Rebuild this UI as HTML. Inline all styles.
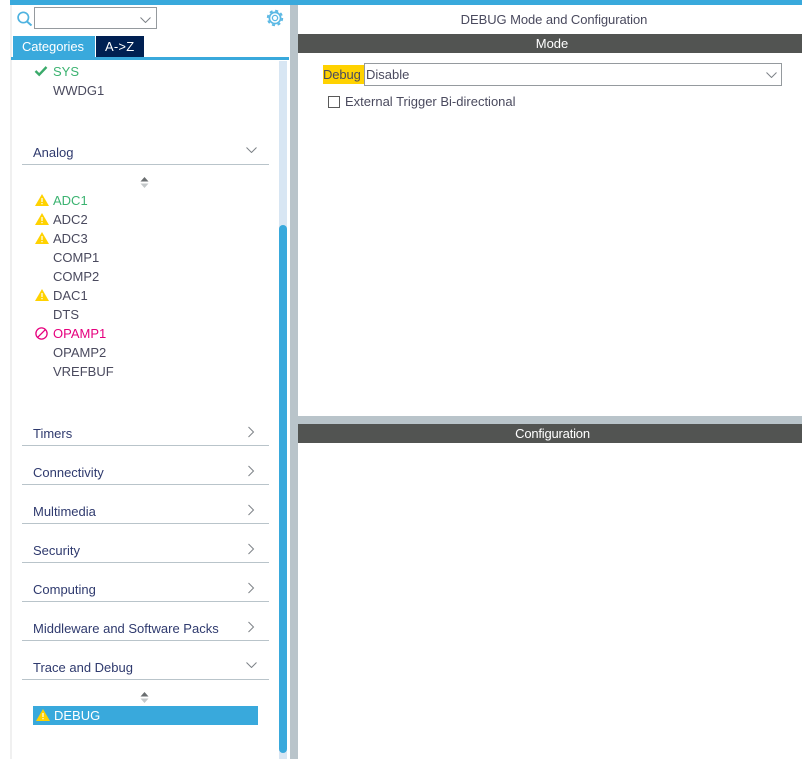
<!DOCTYPE html>
<html><head><meta charset="utf-8"><style>
html,body{margin:0;padding:0;background:#fff}
#r{position:relative;width:802px;height:759px;overflow:hidden;background:#fff;font-family:"Liberation Sans",sans-serif;font-size:13px;color:#4a4a5e}
#r div,#r svg{position:absolute}
.t{white-space:nowrap;line-height:16px}
.it{left:53px}
.cat{left:33px;color:#2f3a6e;white-space:nowrap;line-height:16px}
.ln{left:22px;width:247px;height:1px;background:#b9c4ca}
</style></head><body><div id="r">
<div style="left:10px;top:0;width:792px;height:5px;background:#39a9dc"></div>
<div style="left:10px;top:5px;width:2px;height:754px;background:#f0f0f0"></div>
<div style="left:290px;top:5px;width:8px;height:754px;background:#b9c4ca"></div>

<svg style="left:16px;top:11px" width="17" height="15" viewBox="0 0 17 15"><circle cx="7.300" cy="6.500" r="5.200" fill="none" stroke="#4fb3e0" stroke-width="1.700"/><path d="M11 10.500l4.500 4" stroke="#4fb3e0" stroke-width="2" fill="none"/></svg>
<div style="left:34px;top:7px;height:22px;border:1px solid #959a9e;box-sizing:border-box;width:123px"></div>
<svg style="left:140px;top:17px" width="11" height="6" viewBox="0 0 11 6"><path d="M.5.500l5 5 5-5" fill="none" stroke="#7d8287" stroke-width="1"/></svg>
<svg style="left:266px;top:9px" width="18" height="18" viewBox="0 0 18 18"><circle cx="9" cy="9" r="2.600" fill="none" stroke="#5ab8e4" stroke-width="1.300"/><circle cx="9" cy="9" r="5.600" fill="none" stroke="#5ab8e4" stroke-width="1.700"/><circle cx="9" cy="9" r="7.300" fill="none" stroke="#5ab8e4" stroke-width="1.800" stroke-dasharray="3 2.730"/></svg>

<div style="left:13px;top:36px;width:82px;height:21px;background:#39a9dc"></div>
<div class="t" style="left:22px;top:39px;color:#fff;letter-spacing:-.1px">Categories</div>
<div style="left:96px;top:36px;width:48px;height:21px;background:#002052"></div>
<div class="t" style="left:105px;top:39px;color:#fff;letter-spacing:.2px">A-&gt;Z</div>
<div style="left:11px;top:57px;width:278px;height:3px;background:#39a9dc"></div>

<div style="left:279px;top:61px;width:8px;height:698px;background:#d8e6f3"></div>
<div style="left:279px;top:225px;width:8px;height:528px;background:#39a9dc;border-radius:4px"></div>

<svg style="left:34px;top:65px" width="14" height="12" viewBox="0 0 14 12"><path d="M1.500 6l3.700 3.700L12.500 2" fill="none" stroke="#3aaa6a" stroke-width="2.400"/></svg>
<div class="t it" style="top:64px;color:#3cb371">SYS</div>
<div class="t it" style="top:83px">WWDG1</div>

<div class="cat" style="top:145px">Analog</div>
<svg style="left:246px;top:147px" width="11" height="6" viewBox="0 0 11 6"><path d="M.5.500l5 5 5-5" fill="none" stroke="#7d8287" stroke-width="1"/></svg>
<div class="ln" style="top:164px"></div>
<svg style="left:140px;top:177px" width="9" height="11" viewBox="0 0 9 11"><path d="M4.500 0L8.500 4.500H0.500Z" fill="#6a6e70"/><path d="M0.500 6.500H8.500L4.500 11Z" fill="#c4c8ca"/></svg>

<svg style="left:35px;top:194px" width="14" height="12" viewBox="0 0 14 12"><path d="M7 0L14 12H0Z" fill="#ffd200"/><path d="M6.400 4h1.200v4H6.400zM6.400 9h1.200v1.300H6.400z" fill="#fff"/></svg>
<div class="t it" style="top:193px;color:#3cb371">ADC1</div>
<svg style="left:35px;top:213px" width="14" height="12" viewBox="0 0 14 12"><path d="M7 0L14 12H0Z" fill="#ffd200"/><path d="M6.400 4h1.200v4H6.400zM6.400 9h1.200v1.300H6.400z" fill="#fff"/></svg>
<div class="t it" style="top:212px">ADC2</div>
<svg style="left:35px;top:232px" width="14" height="12" viewBox="0 0 14 12"><path d="M7 0L14 12H0Z" fill="#ffd200"/><path d="M6.400 4h1.200v4H6.400zM6.400 9h1.200v1.300H6.400z" fill="#fff"/></svg>
<div class="t it" style="top:231px">ADC3</div>
<div class="t it" style="top:250px">COMP1</div>
<div class="t it" style="top:269px">COMP2</div>
<svg style="left:35px;top:289px" width="14" height="12" viewBox="0 0 14 12"><path d="M7 0L14 12H0Z" fill="#ffd200"/><path d="M6.400 4h1.200v4H6.400zM6.400 9h1.200v1.300H6.400z" fill="#fff"/></svg>
<div class="t it" style="top:288px">DAC1</div>
<div class="t it" style="top:307px">DTS</div>
<svg style="left:35px;top:327px" width="13" height="13" viewBox="0 0 13 13"><circle cx="6.500" cy="6.500" r="5.600" fill="none" stroke="#e6007e" stroke-width="1.300"/><path d="M2.700 10.300L10.300 2.700" stroke="#e6007e" stroke-width="1.300"/></svg>
<div class="t it" style="top:326px;color:#e6007e">OPAMP1</div>
<div class="t it" style="top:345px">OPAMP2</div>
<div class="t it" style="top:364px">VREFBUF</div>

<div class="cat" style="top:426px">Timers</div>
<svg style="left:247px;top:426px" width="8" height="12" viewBox="0 0 8 12"><path d="M1.500 1l5 5-5 5" fill="none" stroke="#7d8287" stroke-width="1"/></svg>
<div class="ln" style="top:445px"></div>
<div class="cat" style="top:465px">Connectivity</div>
<svg style="left:247px;top:465px" width="8" height="12" viewBox="0 0 8 12"><path d="M1.500 1l5 5-5 5" fill="none" stroke="#7d8287" stroke-width="1"/></svg>
<div class="ln" style="top:484px"></div>
<div class="cat" style="top:504px">Multimedia</div>
<svg style="left:247px;top:504px" width="8" height="12" viewBox="0 0 8 12"><path d="M1.500 1l5 5-5 5" fill="none" stroke="#7d8287" stroke-width="1"/></svg>
<div class="ln" style="top:523px"></div>
<div class="cat" style="top:543px">Security</div>
<svg style="left:247px;top:543px" width="8" height="12" viewBox="0 0 8 12"><path d="M1.500 1l5 5-5 5" fill="none" stroke="#7d8287" stroke-width="1"/></svg>
<div class="ln" style="top:562px"></div>
<div class="cat" style="top:582px">Computing</div>
<svg style="left:247px;top:582px" width="8" height="12" viewBox="0 0 8 12"><path d="M1.500 1l5 5-5 5" fill="none" stroke="#7d8287" stroke-width="1"/></svg>
<div class="ln" style="top:601px"></div>
<div class="cat" style="top:621px">Middleware and Software Packs</div>
<svg style="left:247px;top:621px" width="8" height="12" viewBox="0 0 8 12"><path d="M1.500 1l5 5-5 5" fill="none" stroke="#7d8287" stroke-width="1"/></svg>
<div class="ln" style="top:640px"></div>
<div class="cat" style="top:660px">Trace and Debug</div>
<svg style="left:246px;top:662px" width="11" height="6" viewBox="0 0 11 6"><path d="M.5.500l5 5 5-5" fill="none" stroke="#7d8287" stroke-width="1"/></svg>
<div class="ln" style="top:679px"></div>
<svg style="left:140px;top:692px" width="9" height="11" viewBox="0 0 9 11"><path d="M4.500 0L8.500 4.500H0.500Z" fill="#6a6e70"/><path d="M0.500 6.500H8.500L4.500 11Z" fill="#c4c8ca"/></svg>

<div style="left:33px;top:706px;width:225px;height:19px;background:#39a9dc"></div>
<svg style="left:36px;top:709px" width="14" height="12" viewBox="0 0 14 12"><path d="M7 0L14 12H0Z" fill="#ffd200"/><path d="M6.400 4h1.200v4H6.400zM6.400 9h1.200v1.300H6.400z" fill="#fff"/></svg>
<div class="t" style="left:54px;top:708px;color:#fff">DEBUG</div>

<div class="t" style="left:298px;width:512px;top:12px;text-align:center;letter-spacing:-.07px">DEBUG Mode and Configuration</div>
<div style="left:298px;top:34px;width:504px;height:19px;background:#525452"></div>
<div class="t" style="left:298px;width:508px;top:36px;text-align:center;color:#fff">Mode</div>

<div style="left:323px;top:65px;width:41px;height:19px;background:#ffd200"></div>
<div class="t" style="left:323px;top:67px;letter-spacing:-.1px">Debug</div>
<div style="left:364px;top:63px;width:418px;height:23px;border:1px solid #959a9e;box-sizing:border-box"></div>
<div class="t" style="left:366px;top:67px">Disable</div>
<svg style="left:766px;top:72px" width="11" height="6" viewBox="0 0 11 6"><path d="M.5.500l5 5 5-5" fill="none" stroke="#7d8287" stroke-width="1"/></svg>
<div style="left:328px;top:96px;width:12px;height:12px;border:1px solid #5a5a5a;box-sizing:border-box"></div>
<div class="t" style="left:345px;top:94px">External Trigger Bi-directional</div>

<div style="left:298px;top:416px;width:504px;height:8px;background:#b9c4ca"></div>
<div style="left:298px;top:424px;width:504px;height:19px;background:#525452"></div>
<div class="t" style="left:298px;width:509px;top:426px;text-align:center;color:#fff;letter-spacing:-.2px">Configuration</div>
</div></body></html>
